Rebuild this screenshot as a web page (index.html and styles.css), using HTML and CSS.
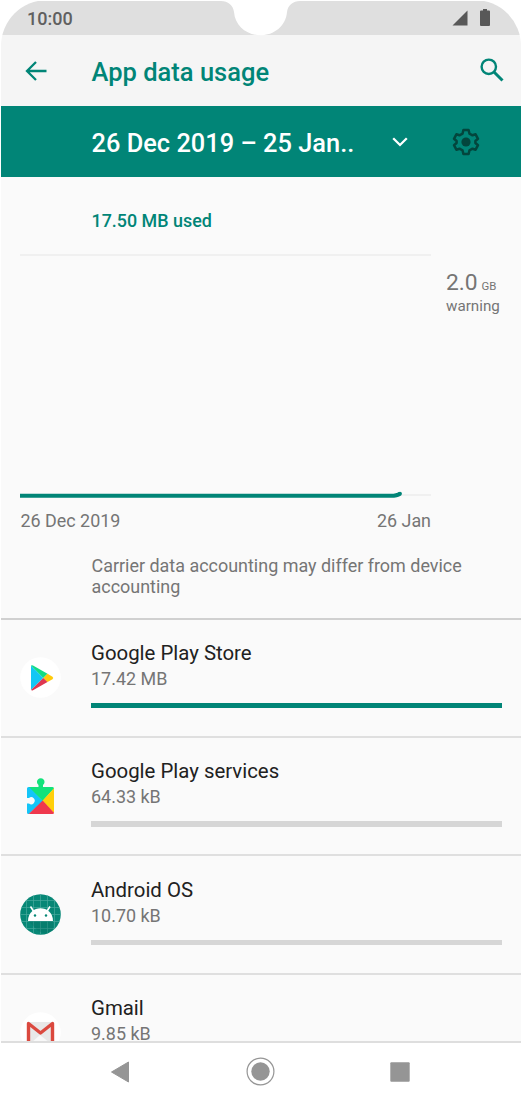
FILE: index.html
```html
<!DOCTYPE html>
<html lang="en">
<head>
    <meta charset="UTF-8">
    <title>App data usage</title>
    <link rel="stylesheet" href="styles.css">
</head>
<body>
<div class="phone">
    <!-- status bar -->
    <div class="status">
        <span class="time">10:00</span>
        <svg class="notch" width="79" height="35" viewBox="0 0 79 35"><path d="M0 0C7 0 12 4 13 11C14 25 26 34.300 39.500 34.300C53 34.300 65 25 66 11C67 4 72 0 79 0Z" fill="#fff"/></svg>
        <svg class="signal" width="16" height="16" viewBox="0 0 16 16"><path d="M15.500 .5V15.500H.5Z" fill="#585858"/></svg>
        <svg class="battery" width="10" height="17" viewBox="0 0 10 17"><path d="M3 0H7V1.500H9Q10 1.500 10 2.500V16Q10 17 9 17H1Q0 17 0 16V2.500Q0 1.500 1 1.500H3Z" fill="#585858"/></svg>
    </div>
    <!-- toolbar -->
    <div class="toolbar">
        <svg class="back" width="22" height="20" viewBox="0 0 22 20"><path d="M11 1L2 10L11 19M2 10H21.500" fill="none" stroke="#018577" stroke-width="2.300"/></svg>
        <h1>App data usage</h1>
        <svg class="search" width="24" height="24" viewBox="0 0 24 24"><circle cx="8.800" cy="8.800" r="7.200" fill="none" stroke="#018577" stroke-width="2.400"/><path d="M14 14L22.500 22.500" stroke="#018577" stroke-width="3"/></svg>
    </div>
    <!-- billing cycle -->
    <div class="cycle">
        <span class="range">26 Dec 2019 – 25 Jan..</span>
        <svg class="down" width="16" height="10" viewBox="0 0 16 10"><path d="M1.200 1.300L8 8L14.800 1.300" fill="none" stroke="#fff" stroke-width="2.300"/></svg>
        <svg width="28" height="28" viewBox="0 0 28 28"><path d="M11.400 2H16.600L17.500 5.700L20.500 7.300L23.600 6.300L26 10.800L23.400 13V15L26 17.200L23.600 21.700L20.500 20.700L17.500 22.300L16.600 26H11.400L10.500 22.300L7.500 20.700L4.400 21.700L2 17.200L4.600 15V13L2 10.800L4.400 6.300L7.500 7.300L10.500 5.700Z" fill="none" stroke="#03463d" stroke-width="2.500" stroke-linejoin="round"/><circle cx="14" cy="14" r="4.600" fill="#03463d"/></svg>
    </div>
    <div class="content">
        <div class="usage">
            <p class="used">17.50 MB used</p>
            <div class="chart">
                <svg width="411" height="244" viewBox="0 0 411 244"><path d="M0 1H411" stroke="#ececec" stroke-width="1.600"/><path d="M380 241H411" stroke="#ececec" stroke-width="1.500"/><path d="M0 241.800H371Q377 241.800 380 239.600" fill="none" stroke="#018577" stroke-width="4"/><circle cx="380" cy="239.700" r="1.900" fill="#018577"/></svg>
                <div class="warning">
                    <p><span class="num">2.0</span> <span class="unit">GB</span></p>
                    <p>warning</p>
                </div>
            </div>
            <div class="dates"><span>26 Dec 2019</span><span>26 Jan</span></div>
            <p class="note">Carrier data accounting may differ from device accounting</p>
        </div>
        <ul class="apps">
            <li>
                <svg width="41" height="41" viewBox="0 0 41 41"><circle cx="20.500" cy="20.500" r="20.300" fill="#fff"/><path d="M11 8.500L23.300 21L11 33Z" fill="#12c7f4"/><path d="M11 8.500Q12 7.800 13 8.500L27.500 16.800L23.300 21Z" fill="#12dc82"/><path d="M27.500 16.800L32.500 19.700Q34 21 32.500 22.200L27.500 25L23.300 21Z" fill="#ffca0a"/><path d="M11 33Q12 33.800 13 33.200L27.500 25L23.300 21Z" fill="#df3851"/></svg>
                <div class="info">
                    <p class="name">Google Play Store</p>
                    <p class="size">17.42 MB</p>
                    <div class="bar full"></div>
                </div>
            </li>
            <li>
                <svg width="41" height="41" viewBox="0 0 41 41"><path d="M8.500 11H10L23 25L9 38H8.500Q7 38 7 36.500V27.500H9A3.500 3.500 0 1 0 9 22H7V12.500Q7 11 8.500 11Z" fill="#13c5f8"/><path d="M9 11H18.500V9A3.800 3.800 0 1 1 23 9V11H32.500Q34 11 34 12.500L22.700 25Z" fill="#12e27b"/><path d="M34 12.300V37L22.500 24.700Z" fill="#ffcf0a"/><path d="M22.700 24.500L34 36.700Q34 38 32.500 38H8.700Z" fill="#ef384d"/></svg>
                <div class="info">
                    <p class="name">Google Play services</p>
                    <p class="size">64.33 kB</p>
                    <div class="bar"></div>
                </div>
            </li>
            <li>
                <svg width="41" height="41" viewBox="0 0 41 41"><circle cx="20.500" cy="20.500" r="20.300" fill="#078776"/><path d="M6.500 6V35M13.500 1.500V39.500M20.500 0V41M27.500 1.500V39.500M34.500 6V35M6 6.500H35M1.500 13.500H39.500M0 20.500H41M1.500 27.500H39.500M6 34.500H35" stroke="#48a99d" stroke-width=".7"/><path d="M8 26.500H33V36L26 40L18 37Z" fill="#056c60" opacity=".35"/><path d="M10.500 12.500L14 18M30 12.500L26.500 18" stroke="#fff" stroke-width="1.600"/><path d="M8 27C8 10 33 10 33 27Z" fill="#fff"/><circle cx="15" cy="21.500" r="1.200" fill="#078776"/><circle cx="26" cy="21.500" r="1.200" fill="#078776"/></svg>
                <div class="info">
                    <p class="name">Android OS</p>
                    <p class="size">10.70 kB</p>
                    <div class="bar"></div>
                </div>
            </li>
            <li>
                <svg width="41" height="41" viewBox="0 0 41 41"><circle cx="20.500" cy="20.500" r="20.300" fill="#fff"/><path d="M7 10H34V31H7Z" fill="#e8e8e8"/><path d="M11 31L20 23L30 31Z" fill="#f8f8f8"/><path d="M8.500 31V11.500L20.500 21L32.500 11.500V31" fill="none" stroke="#db493f" stroke-width="3.400" stroke-linejoin="round"/></svg>
                <div class="info">
                    <p class="name">Gmail</p>
                    <p class="size">9.85 kB</p>
                    <div class="bar"></div>
                </div>
            </li>
        </ul>
    </div>
    <!-- navigation -->
    <div class="nav">
        <svg width="20" height="22" viewBox="0 0 20 22"><path d="M18.500 1V21L1.500 11Z" fill="#959595" stroke="#959595" stroke-linejoin="round"/></svg>
        <svg width="29" height="29" viewBox="0 0 29 29"><circle cx="14.500" cy="14.500" r="13.400" fill="none" stroke="#959595" stroke-width="1.200"/><circle cx="14.500" cy="14.500" r="9.200" fill="#959595"/></svg>
        <svg width="20" height="20" viewBox="0 0 20 20"><rect x=".3" y=".3" width="19.400" height="19.400" rx="1" fill="#959595"/></svg>
    </div>
</div>
</body>
</html>
```
FILE: styles.css
```css
*{
    margin: 0;
    padding: 0;
    list-style: none;
    box-sizing: border-box;
}
body{
    background-color: #fff;
    font-family: Roboto, "Liberation Sans", sans-serif;
    color: #757575;
}
svg{
    display: block;
    flex-shrink: 0;
}
.phone{
    width: 520px;
    height: 1102px;
    margin: 0 auto;
    padding-top: 1px;
    display: flex;
    flex-direction: column;
    border-radius: 46px 46px 0 0;
    overflow: hidden;
}
.status{
    position: relative;
    height: 34px;
    flex-shrink: 0;
    padding: 0 31px 0 26px;
    display: flex;
    align-items: center;
    background-color: #dfdfdf;
    border-radius: 46px 46px 0 0;
}
.time{
    font-size: 18px;
    font-weight: 500;
    color: #606060;
    margin-right: auto;
}
.notch{
    position: absolute;
    left: 220px;
    top: 0;
}
.signal{
    margin-right: 12px;
    margin-bottom: 1px;
}
.battery{
    margin-bottom: 1px;
}
.toolbar{
    height: 71px;
    flex-shrink: 0;
    padding: 0 17px 0 24px;
    display: flex;
    align-items: center;
    background-color: #f5f5f5;
}
.toolbar h1{
    flex: 1;
    margin-left: 44.5px;
    padding-top: 2px;
    font-size: 25.5px;
    font-weight: 500;
    color: #018577;
}
.search{
    margin-bottom: 1px;
}
.cycle{
    height: 71px;
    flex-shrink: 0;
    padding: 0 41px 0 90.5px;
    display: flex;
    align-items: center;
    background-color: #018577;
    color: #fff;
}
.range{
    flex: 1;
    padding-top: 2px;
    font-size: 25.4px;
    font-weight: 500;
    white-space: nowrap;
}
.down{
    margin-right: 44px;
}
.content{
    flex: 1;
    min-height: 0;
    overflow: hidden;
    background-color: #fafafa;
}
.usage{
    height: 442.5px;
    padding-top: 32px;
    border-bottom: 2px solid #d0d0d0;
}
.used{
    padding-left: 90.5px;
    font-size: 17.9px;
    line-height: 24px;
    font-weight: 500;
    color: #018577;
}
.chart{
    display: flex;
    margin-top: 21px;
    padding-left: 19px;
}
.warning{
    margin-left: 15px;
    padding-top: 18px;
    font-size: 15.2px;
    line-height: 22px;
}
.num{
    font-size: 22.8px;
}
.unit{
    font-size: 11.4px;
}
.warning p:last-child{
    line-height: 18px;
}
.dates{
    width: 430px;
    padding: 11px 0 0 19.5px;
    display: flex;
    justify-content: space-between;
    font-size: 17.9px;
    line-height: 24px;
}
.note{
    padding: 22px 40px 0 90.5px;
    font-size: 17.95px;
    line-height: 21px;
}
.apps li{
    height: 118.4px;
    padding: 0 19px;
    display: flex;
    align-items: center;
    border-bottom: 2px solid #dfdfdf;
}
.info{
    flex: 1;
    margin-left: 30px;
    padding-bottom: 8px;
}
.name{
    font-size: 20.4px;
    line-height: 28px;
    color: #212121;
}
.size{
    font-size: 17.95px;
    line-height: 24px;
}
.bar{
    height: 5.5px;
    margin-top: 12px;
    background-color: #d6d6d6;
}
.full{
    background-color: #018577;
}
.nav{
    height: 61px;
    flex-shrink: 0;
    padding: 0 111px 2px 109px;
    display: flex;
    align-items: center;
    justify-content: space-between;
    border-top: 2px solid #dedede;
    background-color: #fff;
}
```
